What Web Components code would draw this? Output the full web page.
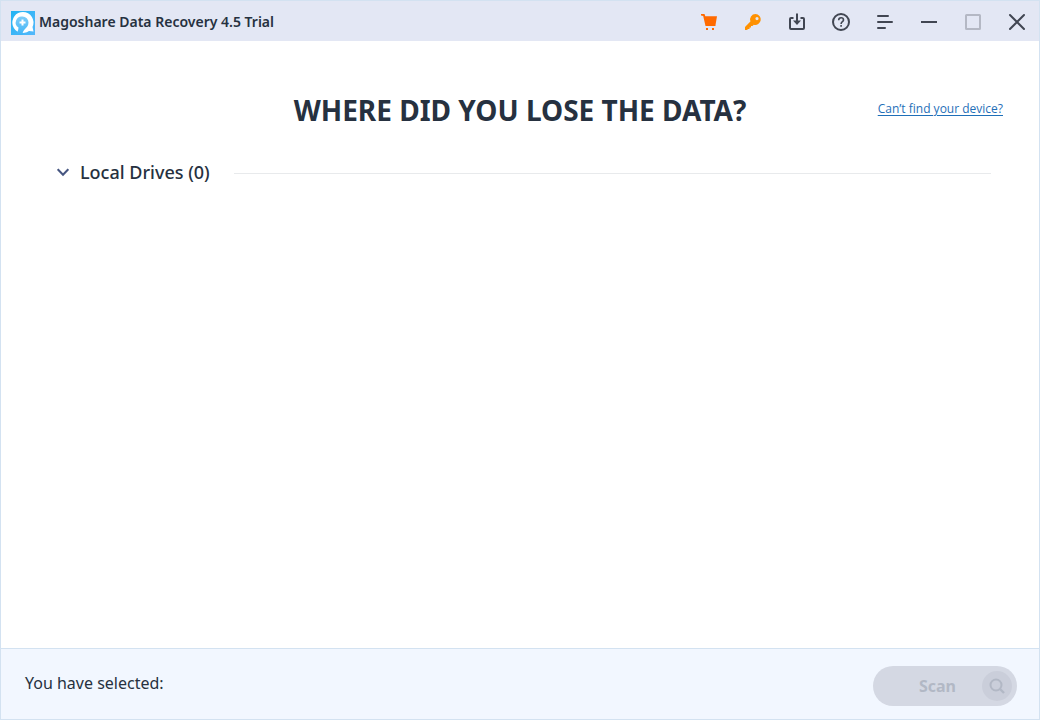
<!DOCTYPE html>
<html lang="en">
<head>
<meta charset="utf-8">
<meta name="viewport" content="width=device-width, initial-scale=1">
<title>Magoshare Data Recovery 4.5 Trial</title>
<style>
  html, body { height: 100%; }
  body {
    margin: 0;
    font-family: "Noto Sans", "Open Sans", sans-serif;
    color: #263140;
    --edge: #d3e2f1;
  }
</style>
</head>
<body>
<recovery-window></recovery-window>

<script>
const define = (name, html, setup) => {
  const template = document.createElement('template');
  template.innerHTML = html;
  customElements.define(name, class extends HTMLElement {
    constructor() {
      super();
      this.attachShadow({ mode: 'open' }).append(template.content.cloneNode(true));
    }
    connectedCallback() { if (setup) setup(this, this.shadowRoot); }
  });
};

define('title-button', `
  <style>
    :host { display: block; width: 44px; }
    button { display: grid; place-items: center; width: 100%; height: 40px; padding: 0; border: 0; background: none; color: #414652; }
    ::slotted(svg) { display: block; width: 20px; height: 20px; }
  </style>
  <button type="button"><slot></slot></button>`,
  (el, root) => {
    const button = root.querySelector('button');
    button.setAttribute('aria-label', el.getAttribute('label'));
    button.disabled = el.hasAttribute('disabled');
  });

define('title-bar', `
  <style>
    :host { display: flex; align-items: center; height: 40px; padding-left: 10px; background: #e3e7f4; }
    .logo { flex: none; width: 24px; height: 24px; margin-top: 4px; margin-right: 4px; }
    h1 { flex: 1; margin: 0; font-size: 14px; line-height: 20px; font-weight: 600; margin-top: 2px; white-space: nowrap; }
    nav { display: flex; padding-top: 2px; }
    title-button svg { fill: none; stroke: #414652; stroke-width: 2; }
  </style>
  <svg class="logo" viewBox="0 0 24 24" aria-hidden="true">
    <defs>
      <linearGradient id="sky" x1="0" y1="0" x2="1" y2="1"><stop stop-color="#22b4f3"/><stop offset="1" stop-color="#55b8fb"/></linearGradient>
      <linearGradient id="tail" x1="0" y1="0" x2="0" y2="1"><stop stop-color="#7fcdf8"/><stop offset="1" stop-color="#3fb4f7"/></linearGradient>
    </defs>
    <rect width="24" height="24" fill="url(#sky)"/>
    <path d="M12 1a10.500 10.500 0 0 1 9.500 15l1 4.500-4.500-.5A10.500 10.500 0 1 1 12 1z" fill="#fff"/>
    <path d="M11.500 5.500a6 6 0 0 1 6 6c0 3.500-2 5-3.500 6.500S11.500 21 11.500 24H5.500c0-2 2-4.500 2-7.500a6 6 0 0 1 4-11z" fill="url(#tail)"/>
    <path d="M11.500 8.500v6M8.500 11.500h6" stroke="#fff" stroke-width="2"/>
  </svg>
  <h1>Magoshare Data Recovery 4.5 Trial</h1>
  <nav aria-label="Window">
    <title-button label="Buy"><svg viewBox="0 0 20 20"><path d="M2 2h3.500l.8 2.300H18l-1.500 8.700v1H6.500L4.200 4 2 3.500z" style="fill:#ff6a00;stroke:none"/><path d="M7 16h2v2H7zM13 16h2v2h-2z" style="fill:#ff6a00;stroke:none"/></svg></title-button>
    <title-button label="Register"><svg viewBox="0 0 20 20"><path fill-rule="evenodd" d="M12.500 2a5.500 5.500 0 1 1-1.700 10.800L9.500 14H8v1.500H6.500V17H5l-1 1H2v-3l5.400-5.500A5.500 5.500 0 0 1 12.500 2zm1.500 3a1.600 1.600 0 1 0 0 3.200A1.600 1.600 0 0 0 14 5z" style="fill:#ff9100;stroke:none"/></svg></title-button>
    <title-button label="Update"><svg viewBox="0 0 20 20"><path d="M6.500 6H4a1 1 0 0 0-1 1v9a1 1 0 0 0 1 1h12a1 1 0 0 0 1-1V7a1 1 0 0 0-1-1h-2.500M10 1.500V12"/><path d="M6 8.500h8L10 13z" style="fill:#414652;stroke:none"/></svg></title-button>
    <title-button label="Help"><svg viewBox="0 0 20 20"><circle cx="10" cy="10" r="8"/><path stroke-width="1.600" d="M7.700 8.200c0-1.600 1-2.500 2.400-2.500s2.400.9 2.400 2.200c0 1.700-2.400 1.900-2.400 4M10.100 13v1.700"/></svg></title-button>
    <title-button label="Menu"><svg viewBox="0 0 20 20"><path stroke-linecap="round" d="M3 4h10M3 10h14M3 16h7"/></svg></title-button>
    <title-button label="Minimize"><svg viewBox="0 0 20 20"><path d="M2 10h16"/></svg></title-button>
    <title-button label="Maximize" disabled><svg viewBox="0 0 20 20"><rect x="3" y="3" width="14" height="14" rx="0.500" style="stroke:#b4b8c4"/></svg></title-button>
    <title-button label="Close"><svg viewBox="0 0 20 20"><path stroke-linecap="round" d="M3 3l14 14M17 3L3 17"/></svg></title-button>
  </nav>`);

define('page-heading', `
  <style>
    :host { display: grid; grid-template-columns: 1fr auto 1fr; align-items: center; padding: 0 36px; }
    h2 { grid-column: 2; margin: 0; font-size: 28px; line-height: 40px; font-weight: 700; white-space: nowrap; }
    ::slotted(a) { justify-self: end; font-family: "Open Sans", "Noto Sans", sans-serif; font-size: 12px; line-height: 16px; color: #1f6fb8; white-space: nowrap; margin-bottom: 2px; text-underline-offset: 2px; }
  </style>
  <h2><slot name="title"></slot></h2>
  <slot></slot>`);

define('drive-group', `
  <style>
    :host { display: block; padding: 0 48px 0 56px; }
    button { display: flex; align-items: center; width: 100%; padding: 0; border: 0; background: none; color: inherit; font: 500 18px/24px "Noto Sans", "Open Sans", sans-serif; text-align: left; }
    svg { flex: none; width: 12px; height: 12px; margin-right: 11px; fill: none; stroke: #465681; stroke-width: 2; }
    .rule { flex: 1; height: 1px; margin: 3px 0 0 24px; background: #e8eaec; }
  </style>
  <button type="button" aria-expanded="true">
    <svg viewBox="0 0 12 12" aria-hidden="true"><path d="M.7 3.200L6 8.700l5.300-5.500"/></svg>
    <slot></slot><span class="rule"></span>
  </button>`);

define('scan-button', `
  <style>
    :host { display: block; }
    button { display: flex; align-items: center; width: 144px; height: 40px; padding: 0 5px 0 16px; border: 0; border-radius: 20px; background: #d4d8e3; color: #b2b8c5; font: 700 16px/24px "Noto Sans", "Open Sans", sans-serif; }
    .label { flex: 1; text-align: center; padding-left: 4px; }
    .badge { display: grid; place-items: center; width: 30px; height: 30px; border-radius: 50%; background: #caceda; }
    svg { width: 16px; height: 16px; fill: none; stroke: #b2b8c5; stroke-width: 2; }
  </style>
  <button type="button" disabled>
    <span class="label"><slot></slot></span>
    <span class="badge"><svg viewBox="0 0 16 16" aria-hidden="true"><circle cx="7" cy="7" r="5.500"/><path stroke-width="2.400" d="M11 11l4 4"/></svg></span>
  </button>`);

define('status-bar', `
  <style>
    :host { display: flex; justify-content: space-between; align-items: center; box-sizing: border-box; min-height: 71px; padding: 4px 22px 0 24px; border-top: 1px solid var(--edge); background: #f2f7ff; font-size: 16px; line-height: 24px; }
    p { margin: 0 0 6px; }
  </style>
  <p>You have selected:</p>
  <scan-button>Scan</scan-button>`);

define('recovery-window', `
  <style>
    :host { display: flex; flex-direction: column; box-sizing: border-box; min-height: 100vh; border: 1px solid var(--edge); background: #fff; }
    main { flex: 1; padding-top: 49px; }
    drive-group { margin-top: 30px; }
  </style>
  <title-bar></title-bar>
  <main>
    <page-heading><span slot="title">WHERE DID YOU LOSE THE DATA?</span><a href="#device-help">Can’t find your device?</a></page-heading>
    <drive-group>Local Drives (0)</drive-group>
  </main>
  <status-bar></status-bar>`);
</script>
</body>
</html>
